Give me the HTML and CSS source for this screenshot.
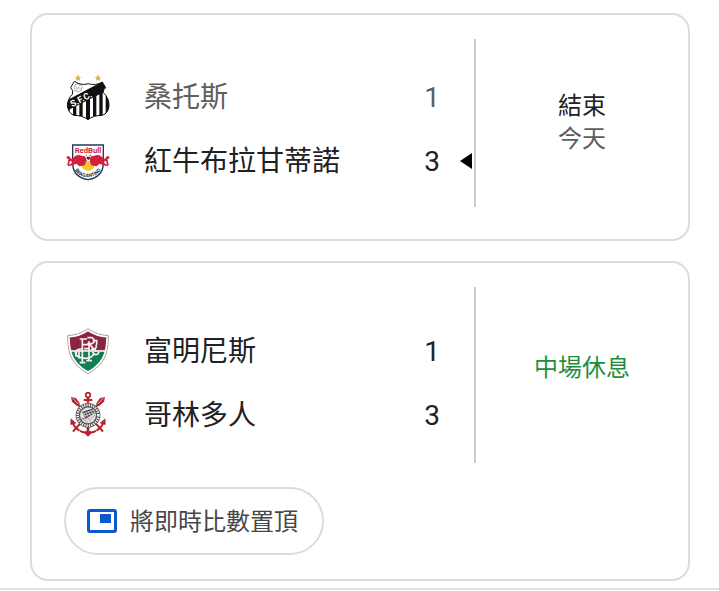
FILE: index.html
```html
<!DOCTYPE html>
<html lang="zh-Hant">

<head>
    <meta charset="utf-8">
    <meta name="viewport" content="width=device-width, initial-scale=1">
    <title>比數</title>
    <link rel="stylesheet" href="styles.css">
</head>
<body>
<main class="matches">
    <section class="card">
        <div class="match">
            <div class="teams">
                <table>
                    <tr class="loser">
                        <td class="logo">
                            <svg viewBox="72 42 144 144" aria-hidden="true">
                                <defs>
                                    <clipPath id="santosShape">
                                        <path d="M103 64Q124 78 145 71Q166 78 187 66L197 83Q188 89 190 98Q208 114 207 138Q205 160 187 166Q160 166 144 179Q128 166 101 166Q84 158 82 136Q83 116 97 103Q102 92 92 83Z" />
                                    </clipPath>
                                </defs>
                                <path fill="#d9b64a" d="M114 43l3 7 7 1-5 4 2 8-7-4-6 4 1-8-5-4 7-1zM174 43l3 7 7 1-5 4 2 8-7-4-6 4 1-8-5-4 7-1z" />
                                <g clip-path="url(#santosShape)">
                                    <path fill="#fff" d="M76 60h136v124H76z" />
                                    <path fill="#111" d="M80 130h9v50h-9zM99 120h10v60H99zM118 110h10v70h-10zM138 105h12v80h-12zM159 95h10v85h-10zM178 90h10v85h-10zM197 90h10v80h-10z" />
                                    <path fill="#111" d="M76 123L200 58V92L76 155z" />
                                </g>
                                <circle cx="114" cy="83" r="12" fill="#fff" stroke="#888" stroke-width="2" />
                                <path fill="none" stroke="#999" stroke-width="2" d="M107 77l5 13 4-9 6 7M112 72l8 5" />
                                <path fill="none" stroke="#111" stroke-width="3" d="M103 64Q124 78 145 71Q166 78 187 66L197 83Q188 89 190 98Q208 114 207 138Q205 160 187 166Q160 166 144 179Q128 166 101 166Q84 158 82 136Q83 116 97 103Q102 92 92 83Z" />
                                <text class="santos-text" x="97" y="142" transform="rotate(-28 97 142)">S.F.C.</text>
                            </svg>
                        </td>
                        <td class="name">桑托斯</td>
                        <td class="score">1</td>
                        <td class="marker"></td>
                    </tr>
                    <tr>
                        <td class="logo">
                            <svg viewBox="72 234 144 144" aria-hidden="true">
                                <defs>
                                    <path id="bragantinoArc" d="M101 321Q109 350 143 352Q178 350 186 321" />
                                </defs>
                                <path fill="#fff" stroke="#26375f" stroke-width="4" d="M98 255h92v58q-3 39-46 46q-43-7-46-46z" />
                                <circle cx="144" cy="312" r="20" fill="#fdc52c" />
                                <circle cx="145" cy="293" r="11" fill="#fff" />
                                <path fill="#333" d="M141 290h8l2 5-6 5-6-5zM136 288l3-4 3 2zM149 283l5 4-4 2zM136 299l5 2-1 3zM150 301l4-2-2 5z" />
                                <path fill="#d21f3c" d="M84 288q-6 1-4 7l6 3q-3 6-2 10l-5 7 9-4 2-9 7 4-5 6-10 2 3 5 15-4 9-4 9 8 16-3 3-8 2-10-4-9-10-2q-14-6-24 5l-5 5q-7-2-6-6z" />
                                <path fill="#d21f3c" d="M204 288q6 1 4 7l-6 3q3 6 2 10l5 7-9-4-2-9-7 4 5 6 10 2-3 5-15-4-9-4-9 8-16-3-3-8-2-10 4-9 10-2q14-6 24 5l5 5q7-2 6-6z" />
                                <path fill="#fdc52c" d="M139 304h10l-1 15h-8z" />
                                <text class="redbull-text" x="144" y="278" text-anchor="middle">RedBull</text>
                                <text class="bragantino-text"><textPath href="#bragantinoArc" startOffset="50%" text-anchor="middle">BRAGANTINO</textPath></text>
                            </svg>
                        </td>
                        <td class="name">紅牛布拉甘蒂諾</td>
                        <td class="score">3</td>
                        <td class="marker"><span class="winner"></span></td>
                    </tr>
                </table>
            </div>
            <div class="status">
                <div>結束</div>
                <div class="day">今天</div>
            </div>
        </div>
    </section>

    <section class="card live">
        <div class="match">
            <div class="teams">
                <table>
                    <tr>
                        <td class="logo">
                            <svg viewBox="72 36 144 144" aria-hidden="true">
                                <defs>
                                    <clipPath id="fluShape">
                                        <path d="M144 38Q168 56 205 59Q206 87 199 112Q188 150 144 173Q100 150 89 112Q82 87 83 59Q120 56 144 38Z" />
                                    </clipPath>
                                </defs>
                                <g clip-path="url(#fluShape)">
                                    <path fill="#8a2440" d="M80 36h130v68H80z" />
                                    <path fill="#137d52" d="M80 105h130v72H80z" />
                                    <path fill="#fff" d="M80 103h130v4H80z" />
                                    <path fill="none" stroke="#fff" stroke-width="13" d="M144 38Q168 56 205 59Q206 87 199 112Q188 150 144 173Q100 150 89 112Q82 87 83 59Q120 56 144 38Z" />
                                </g>
                                <path fill="none" stroke="#a0878d" stroke-width="2" d="M144 38Q168 56 205 59Q206 87 199 112Q188 150 144 173Q100 150 89 112Q82 87 83 59Q120 56 144 38Z" />
                                <g fill="none" stroke="#f8f1f2" stroke-width="5">
                                    <path d="M127 70v70M119 140h17M119 69h22M127 86h20M132 98h15M147 76v58M139 134h17" />
                                    <path d="M142 65h14q14 9 1 18h-11l23 23M158 74h12v12M168 86q5 16-16 14" />
                                    <path d="M127 99q-20-1-21 12q4 15 31 16q21-1 24-15M158 108q4 11 15 7l4-8M110 107l-3 15M117 104v24" />
                                </g>
                            </svg>
                        </td>
                        <td class="name">富明尼斯</td>
                        <td class="score">1</td>
                        <td class="marker"></td>
                    </tr>
                    <tr>
                        <td class="logo">
                            <svg viewBox="72 228 144 144" aria-hidden="true">
                                <g fill="none" stroke="#b9202f">
                                    <circle cx="144" cy="237" r="7" stroke-width="5" />
                                    <path stroke-width="8" d="M144 245v15M144 332v25" />
                                    <path stroke-width="6" d="M131 252h26M108 260l14 14M180 260l-14 14M122 321l-23 26M166 321l23 26" />
                                    <path stroke-width="6" d="M97 320q14 29 47 32q33-3 47-32" />
                                </g>
                                <path fill="#b9202f" d="M93 243l15 3 12 18-8 7-16-14zM195 243l-15 3-12 18 8 7 16-14zM92 307l17 15-18 5zM196 307l-17 15 18 5zM134 346h20l-2 8-8 8-8-8z" />
                                <path stroke="#fff" stroke-width="2" d="M97 245l17 19M191 245l-17 19M117 348l5-8M171 348l-5-8" />
                                <circle cx="144" cy="298" r="37" fill="#4b4b4b" />
                                <circle cx="144" cy="298" r="31" fill="none" stroke="#eee" stroke-width="8" stroke-dasharray="4 3" />
                                <circle cx="144" cy="298" r="25" fill="#e4e4e4" stroke="#444" stroke-width="2" />
                                <path fill="#444" d="M126 288l30-10 9 13-28 18z" />
                                <path fill="none" stroke="#eee" stroke-width="2" d="M130 290l8 16M137 288l8 16M144 285l8 16M151 281l8 14M128 294l32-11M133 300l31-10" />
                                <path fill="none" stroke="#777" stroke-width="2" d="M124 304l19 14M151 309l13-11M143 305l9 12M124 284l11-7" />
                                <path stroke="#b9202f" stroke-width="2" d="M124 312l16-10" />
                            </svg>
                        </td>
                        <td class="name">哥林多人</td>
                        <td class="score">3</td>
                        <td class="marker"></td>
                    </tr>
                </table>
            </div>
            <div class="status">
                <div>中場休息</div>
            </div>
        </div>
        <button class="pin" type="button">
            <svg viewBox="0 0 30 24" aria-hidden="true">
                <rect x="1.5" y="1.5" width="27" height="21" rx="1.5" fill="none" stroke="#0b57d0" stroke-width="3" />
                <path fill="#0b57d0" d="M13 5h11v9H13z" />
            </svg>
            <span>將即時比數置頂</span>
        </button>
    </section>
</main>
</body>
</html>
```
FILE: styles.css
```css
html, body {
    margin: 0;
    background-color: #fff;
    color: #202124;
    font-family: Roboto, "Noto Sans CJK TC", sans-serif;
}

.matches {
    display: flex;
    flex-direction: column;
    gap: 20px;
    padding: 13px 29px 7px 30px;
    border-bottom: 2px solid #dfe1e3;
}

.card {
    border: 2px solid #dadce0;
    border-radius: 18px;
    padding: 24px 0 32px 32px;
}

.match {
    display: grid;
    grid-template-columns: 1fr 214px;
}

.teams {
    padding: 27px 0 13px;
}

table {
    width: 100%;
    border-collapse: collapse;
    font-size: 28px;
    line-height: 32px;
}

td {
    height: 64px;
    padding: 0;
}

.loser {
    color: #5e5e5e;
}

.logo {
    width: 80px;
}

.logo svg {
    display: block;
    width: 48px;
    height: 48px;
}

.score {
    width: 32px;
    text-align: right;
}

.marker {
    width: 34px;
}

.winner {
    display: block;
    width: 0;
    margin: 0 2px 2px auto;
    border: 8px solid transparent;
    border-right: 12px solid #000;
    border-left: none;
}

.status {
    display: flex;
    flex-direction: column;
    justify-content: center;
    border-left: 2px solid #ccc;
    font-size: 24px;
    line-height: 33px;
    text-align: center;
}

.day {
    color: #5e5e5e;
}

/* match in progress */
.live {
    padding-bottom: 24px;
}

.live .teams {
    padding: 33px 0 15px;
}

.live .status {
    padding-bottom: 14px;
    color: #1e8e3e;
}

.pin {
    display: flex;
    align-items: center;
    gap: 13px;
    height: 68px;
    margin-top: 24px;
    padding: 0 24px 0 21px;
    border: 2px solid #dadce0;
    border-radius: 34px;
    background-color: #fff;
    color: #474747;
    font-family: inherit;
    font-size: 24px;
    cursor: pointer;
}

.pin:hover {
    background-color: #f6f8fb;
}

.pin svg {
    width: 30px;
    height: 24px;
}

.pin span {
    padding-bottom: 4px;
}

/* lettering on the crests */
.santos-text {
    fill: #fff;
    font-size: 27px;
    font-weight: 700;
}

.redbull-text {
    fill: #d21f3c;
    font-size: 23px;
    font-weight: 700;
}

.bragantino-text {
    fill: #26375f;
    font-size: 15px;
    font-weight: 700;
}
```
